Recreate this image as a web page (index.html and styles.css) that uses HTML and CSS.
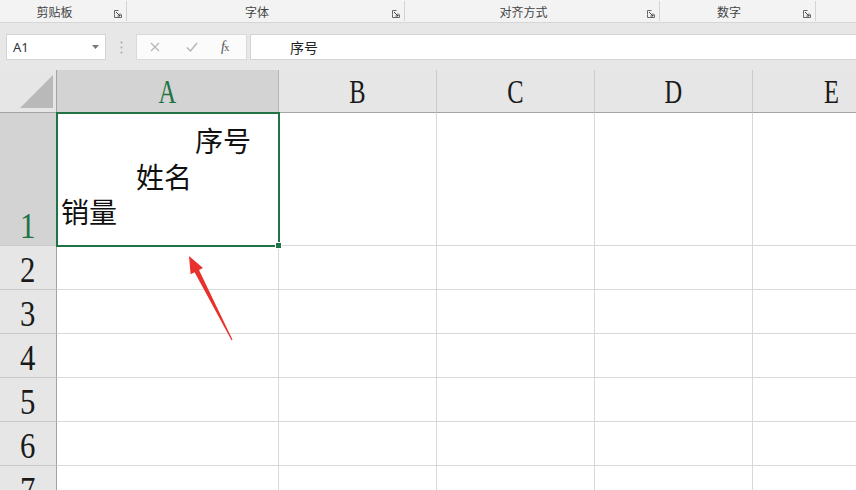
FILE: index.html
```html
<!DOCTYPE html>
<html lang="zh">
<head>
<meta charset="utf-8">
<link rel="stylesheet" href="styles.css">
</head>
<body>
<div class="app">
  <div class="ribbon">
    <div class="grp g1"><span class="lbl">剪贴板</span><span class="launch"><svg viewBox="0 0 8 8" width="8" height="8"><path d="M0.5 4.5V0.5h4M0.5 4.5v3h7v-3" fill="none" stroke="#666" stroke-width="1"/><path d="M2 2l4 4M6 3.5V6H3.5" fill="none" stroke="#444" stroke-width="1"/></svg></span></div>
    <div class="grp g2"><span class="lbl">字体</span><span class="launch"><svg viewBox="0 0 8 8" width="8" height="8"><path d="M0.5 4.5V0.5h4M0.5 4.5v3h7v-3" fill="none" stroke="#666" stroke-width="1"/><path d="M2 2l4 4M6 3.5V6H3.5" fill="none" stroke="#444" stroke-width="1"/></svg></span></div>
    <div class="grp g3"><span class="lbl">对齐方式</span><span class="launch"><svg viewBox="0 0 8 8" width="8" height="8"><path d="M0.5 4.5V0.5h4M0.5 4.5v3h7v-3" fill="none" stroke="#666" stroke-width="1"/><path d="M2 2l4 4M6 3.5V6H3.5" fill="none" stroke="#444" stroke-width="1"/></svg></span></div>
    <div class="grp g4"><span class="lbl">数字</span><span class="launch"><svg viewBox="0 0 8 8" width="8" height="8"><path d="M0.5 4.5V0.5h4M0.5 4.5v3h7v-3" fill="none" stroke="#666" stroke-width="1"/><path d="M2 2l4 4M6 3.5V6H3.5" fill="none" stroke="#444" stroke-width="1"/></svg></span></div>
    <div class="grp g5"></div>
  </div>

  <div class="fbar">
    <div class="namebox"><span class="ref">A1</span><svg class="dd" viewBox="0 0 7 4" width="7" height="4"><path d="M0 0h7L3.5 4z" fill="#777"/></svg></div>
    <svg class="dots" viewBox="0 0 3 13" width="3" height="13"><circle cx="1.5" cy="1.5" r="1" fill="#aaa"/><circle cx="1.5" cy="6.5" r="1" fill="#aaa"/><circle cx="1.5" cy="11.5" r="1" fill="#aaa"/></svg>
    <div class="btns">
      <svg class="bx" viewBox="0 0 10 10" width="10" height="10"><path d="M1 1l8 8M9 1l-8 8" stroke="#b4b4b4" stroke-width="1.2" fill="none"/></svg>
      <svg class="bok" viewBox="0 0 12 10" width="12" height="10"><path d="M1 5.5l3.5 3.5L11 1" stroke="#b4b4b4" stroke-width="1.4" fill="none"/></svg>
      <span class="fx"><i>f</i><span class="xs">x</span></span>
    </div>
    <div class="finput">序号</div>
  </div>

  <div class="sheet">
    <div class="corner"><svg viewBox="0 0 56 42" width="56" height="42"><path d="M20 38L53 5V38Z" fill="#b9b9b9"/></svg></div>
    <div class="ch sel"><span class="hl">A</span></div>
    <div class="ch"><span class="hl">B</span></div>
    <div class="ch"><span class="hl">C</span></div>
    <div class="ch"><span class="hl">D</span></div>
    <div class="ch last"><span class="hl">E</span></div>

    <div class="rh sel r1"><span class="rn">1</span></div>
    <div class="c a1">
      <div class="ln l1">序号</div>
      <div class="ln l2">姓名</div>
      <div class="ln l3">销量</div>
    </div>
    <div class="c"></div><div class="c"></div><div class="c"></div><div class="c last"></div>

    <div class="rh"><span class="rn">2</span></div>
    <div class="c"></div><div class="c"></div><div class="c"></div><div class="c"></div><div class="c last"></div>
    <div class="rh"><span class="rn">3</span></div>
    <div class="c"></div><div class="c"></div><div class="c"></div><div class="c"></div><div class="c last"></div>
    <div class="rh"><span class="rn">4</span></div>
    <div class="c"></div><div class="c"></div><div class="c"></div><div class="c"></div><div class="c last"></div>
    <div class="rh"><span class="rn">5</span></div>
    <div class="c"></div><div class="c"></div><div class="c"></div><div class="c"></div><div class="c last"></div>
    <div class="rh"><span class="rn">6</span></div>
    <div class="c"></div><div class="c"></div><div class="c"></div><div class="c"></div><div class="c last"></div>
    <div class="rh"><span class="rn">7</span></div>
    <div class="c"></div><div class="c"></div><div class="c"></div><div class="c"></div><div class="c last"></div>

    <svg class="arrow" viewBox="0 0 856 490" width="856" height="490"><polygon points="189,256 203,267.9 199,270 232.5,339.8 231.5,340.2 194.6,272.2 190.6,274.3" fill="#e8302c"/></svg>
  </div>
</div>
</body>
</html>
```

FILE: styles.css
```css
html, body {
  margin: 0;
  padding: 0;
  width: 856px;
  height: 490px;
  overflow: hidden;
  background: #ffffff;
}

.app {
  width: 856px;
  height: 490px;
  overflow: hidden;
  font-family: "Noto Sans CJK SC", "Noto Sans", sans-serif;
  position: relative;
}

/* ribbon group labels */
.ribbon {
  height: 22px;
  display: flex;
  background: #f3f3f3;
  border-bottom: 1px solid #d6d6d6;
}
.grp {
  display: flex;
  align-items: center;
  border-right: 1px solid #d3d3d3;
  height: 20px;
  margin-top: 1px;
}
.g1 { width: 126px; }
.g2 { width: 277px; }
.g3 { width: 254px; }
.g4 { width: 155px; }
.g5 { flex: 1; border-right: none; }
.lbl {
  flex: 1;
  text-align: center;
  font-size: 12px;
  color: #444;
  line-height: 20px;
  padding-top: 2px;
}
.launch {
  width: 17px;
  display: flex;
  justify-content: flex-start;
  padding-left: 5px;
  box-sizing: border-box;
  padding-top: 6px;
}
.launch svg { display: block; }

/* formula bar */
.fbar {
  height: 47px;
  background: #e7e7e7;
  display: flex;
  align-items: flex-start;
  padding-top: 11px;
  box-sizing: border-box;
}
.namebox {
  margin-left: 6px;
  width: 100px;
  height: 26px;
  box-sizing: border-box;
  background: #fff;
  border: 1px solid #d4d4d4;
  display: flex;
  align-items: center;
  justify-content: space-between;
  padding: 0 6px 0 6px;
}
.ref {
  font-family: "Noto Sans", "Liberation Sans", sans-serif;
  font-size: 13px;
  color: #333;
}
.dd { display: block; }
.dots {
  display: block;
  margin: 7px 0 0 14px;
}
.btns {
  margin-left: 13px;
  width: 111px;
  height: 26px;
  box-sizing: border-box;
  background: #fbfbfb;
  border: 1px solid #dadada;
  display: flex;
  align-items: center;
}
.bx { margin-left: 13px; display: block; }
.bok { margin-left: 26px; display: block; }
.fx {
  margin-left: 23px;
  font-family: "Liberation Serif", serif;
  font-size: 14px;
  color: #555;
  letter-spacing: -1px;
}
.fx .xs { font-size: 11px; font-style: normal; }
.finput {
  margin-left: 3px;
  flex: 1;
  height: 26px;
  box-sizing: border-box;
  background: #fff;
  border: 1px solid #d4d4d4;
  border-right: none;
  font-size: 14px;
  color: #222;
  line-height: 24px;
  padding-left: 39px;
}

/* sheet grid */
.sheet {
  position: relative;
  display: grid;
  grid-template-columns: 57px 222px 158px 158px 158px 158px;
  grid-template-rows: 43px 133px 44px 44px 44px 44px 44px 44px;
}
.corner {
  background: #e6e6e6;
  border-right: 1px solid #a3a3a3;
  border-bottom: 1px solid #a3a3a3;
  box-sizing: border-box;
}
.corner svg { display: block; }
.ch {
  background: #e6e6e6;
  border-right: 1px solid #cbcbcb;
  border-bottom: 1px solid #a3a3a3;
  box-sizing: border-box;
  text-align: center;
  font-family: "Liberation Serif", serif;
  font-size: 34px;
  line-height: 40px;
  padding-top: 2px;
  color: #1a1a1a;
}
.ch.sel {
  background: #d3d3d3;
  color: #217346;
  border-right: 1px solid #b5b5b5;
}
.hl {
  display: inline-block;
  transform: scaleX(0.72);
}
.rh {
  background: #e6e6e6;
  border-right: 1px solid #a3a3a3;
  border-bottom: 1px solid #c9c9c9;
  box-sizing: border-box;
  display: flex;
  align-items: flex-end;
  justify-content: center;
  font-family: "Liberation Serif", serif;
  font-size: 35px;
  line-height: 36px;
  color: #1a1a1a;
}
.rh.sel {
  background: #d3d3d3;
  color: #217346;
}
.rn {
  display: inline-block;
  transform: scaleX(0.88);
}
.c {
  border-right: 1px solid #d9d9d9;
  border-bottom: 1px solid #d9d9d9;
  box-sizing: border-box;
  background: #fff;
}

.a1 {
  position: relative;
  padding-top: 10px;
  font-size: 28px;
  line-height: 35.5px;
  color: #111;
}
.a1::after {
  content: "";
  position: absolute;
  left: -1px;
  top: -1px;
  right: -2px;
  bottom: -2px;
  border: 2px solid #217346;
  pointer-events: none;
}
.a1::before {
  content: "";
  position: absolute;
  right: -4px;
  bottom: -4px;
  width: 5px;
  height: 5px;
  background: #217346;
  border: 1px solid #fff;
  z-index: 2;
}
.ln { white-space: nowrap; }
.l1 { padding-left: 138px; }
.l2 { padding-left: 79px; }
.l3 { padding-left: 4px; }

.arrow {
  position: absolute;
  left: 0;
  top: -70px;
  pointer-events: none;
}
```
